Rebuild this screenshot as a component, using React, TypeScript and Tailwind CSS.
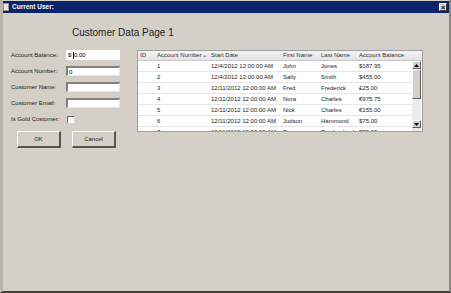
import React from "react";

const rows = [
  ["1", "12/4/2012 12:00:00 AM", "John", "Jones", "$187.95"],
  ["2", "12/4/2012 12:00:00 AM", "Sally", "Smith", "$455.00"],
  ["3", "12/11/2012 12:00:00 AM", "Fred", "Frederick", "£25.00"],
  ["4", "12/11/2012 12:00:00 AM", "Nora", "Charles", "€975.75"],
  ["5", "12/11/2012 12:00:00 AM", "Nick", "Charles", "€155.00"],
  ["6", "12/11/2012 12:00:00 AM", "Judson", "Hammond", "$75.00"],
  ["7", "12/11/2012 12:00:00 AM", "Dave", "Reichenbach", "$55.00"],
];

function Sunken({ children }: { children?: React.ReactNode }) {
  return (
    <div className="w-[54px] h-[10px] bg-white border-t-2 border-l-2 border-t-[#808080] border-l-[#808080] border-b border-r border-b-[#e8e8e8] border-r-[#e8e8e8] flex items-center pl-[1px] text-[6px] leading-none text-black">
      {children}
    </div>
  );
}

function Btn({ label }: { label: string }) {
  return (
    <div className="w-[44px] h-[17px] bg-[#d4d0c8] border-t border-l border-t-white border-l-white border-b-2 border-r-2 border-b-[#555] border-r-[#555] flex items-center justify-center text-[6px] text-[#222]">
      {label}
    </div>
  );
}

export default function App() {
  const font = { fontFamily: '"Liberation Sans", Arial, sans-serif' };
  return (
    <div
      className="w-[451px] h-[293px] bg-[#d4d0c8] overflow-hidden flex flex-col border-l-[3px] border-l-[#b8b4ac] border-r-2 border-r-[#8a8680] border-b-2 border-b-[#404040]"
      style={font}
    >
      <div className="pt-[1px] -ml-[3px] -mr-[2px]">
        <div className="h-[12px] bg-[#0a246a] flex items-center pl-[3px] pr-[4px]">
          <div className="w-[6px] h-[8px] bg-[#e8e4d8] border border-[#a09880] mr-[3px]" />
          <span className="text-white font-bold text-[6.5px] leading-none">Current User:</span>
          <div className="ml-auto w-[8px] h-[8px] bg-[#d4d0c8] border-t border-l border-t-white border-l-white border-b border-r border-b-[#404040] border-r-[#404040] flex items-center justify-center text-[7px] leading-none font-bold text-black">
            ×
          </div>
        </div>
      </div>

      <div className="mt-[14px] pl-[69px] h-[12px] text-[10px] leading-[12px] text-[#222]">
        Customer Data Page 1
      </div>

      <div className="mt-[11px] flex pl-[8px]">
        <div className="w-[110px] flex flex-col text-[6px] text-[#1a1a1a]">
          <div className="h-[16px] flex items-start">
            <span className="w-[55px] h-[10px] flex items-center">Account Balance:</span>
            <div className="w-[54px] h-[10px] bg-white flex items-center pl-[2px] text-[6px] text-black leading-none">
              $&nbsp;<span className="inline-block w-[1px] h-[7px] bg-black" />0.00
            </div>
          </div>
          <div className="h-[16px] flex items-start">
            <span className="w-[55px] h-[10px] flex items-center">Account Number:</span>
            <Sunken>0</Sunken>
          </div>
          <div className="h-[16px] flex items-start">
            <span className="w-[55px] h-[10px] flex items-center">Customer Name:</span>
            <Sunken />
          </div>
          <div className="h-[16px] flex items-start">
            <span className="w-[55px] h-[10px] flex items-center">Customer Email:</span>
            <Sunken />
          </div>
          <div className="h-[10px] flex items-center">
            <span className="w-[56px]">Is Gold Customer:</span>
            <div className="w-[7px] h-[7px] bg-white border-t border-l border-t-[#606060] border-l-[#606060]" />
          </div>
          <div className="mt-[7px] flex gap-[11px] pl-[6px]">
            <Btn label="OK" />
            <Btn label="Cancel" />
          </div>
        </div>

        <div className="ml-[16px] w-[286px] h-[82px] border border-[#a0a0a0] bg-white flex flex-col text-[6px] text-[#222] overflow-hidden">
          <div className="h-[10px] shrink-0 flex items-center bg-gradient-to-b from-[#f4f4f4] to-[#e4e4e4] border-b border-[#c8c8c8] text-[#333]">
            <div className="w-[17px] pl-[2px]">ID</div>
            <div className="w-[54px] pl-[2px] flex items-center">
              Account Number
              <span className="ml-[1px] text-[4px] text-[#888]">▲</span>
            </div>
            <div className="w-[72px] pl-[2px]">Start Date</div>
            <div className="w-[38px] pl-[2px]">First Name</div>
            <div className="w-[38px] pl-[2px]">Last Name</div>
            <div className="flex-1 pl-[2px]">Account Balance</div>
          </div>
          <div className="flex flex-1 min-h-0">
            <div className="flex-1 flex flex-col overflow-hidden">
              {rows.map((r) => (
                <div key={r[0]} className="h-[11px] shrink-0 flex items-center border-b border-[#e6e6e6]">
                  <div className="w-[17px]" />
                  <div className="w-[54px] pl-[2px]">{r[0]}</div>
                  <div className="w-[72px] pl-[2px]">{r[1]}</div>
                  <div className="w-[38px] pl-[2px]">{r[2]}</div>
                  <div className="w-[38px] pl-[2px]">{r[3]}</div>
                  <div className="flex-1 pl-[2px]">{r[4]}</div>
                </div>
              ))}
            </div>
            <div className="w-[9px] mr-[1px] bg-[#ececec] flex flex-col">
              <div className="h-[8px] bg-[#d4d0c8] border-t border-l border-t-white border-l-white border-b border-r border-b-[#606060] border-r-[#606060] flex items-center justify-center">
                <svg width="5" height="3" viewBox="0 0 5 3"><path d="M2.5 0 L5 3 L0 3 Z" fill="#000" /></svg>
              </div>
              <div className="h-[30px] bg-[#d4d0c8] border-t border-l border-t-white border-l-white border-b border-r border-b-[#606060] border-r-[#606060]" />
              <div className="flex-1" />
              <div className="h-[8px] bg-[#d4d0c8] border-t border-l border-t-white border-l-white border-b border-r border-b-[#606060] border-r-[#606060] flex items-center justify-center mb-[3px]">
                <svg width="5" height="3" viewBox="0 0 5 3"><path d="M0 0 L5 0 L2.5 3 Z" fill="#000" /></svg>
              </div>
            </div>
          </div>
        </div>
      </div>
    </div>
  );
}
